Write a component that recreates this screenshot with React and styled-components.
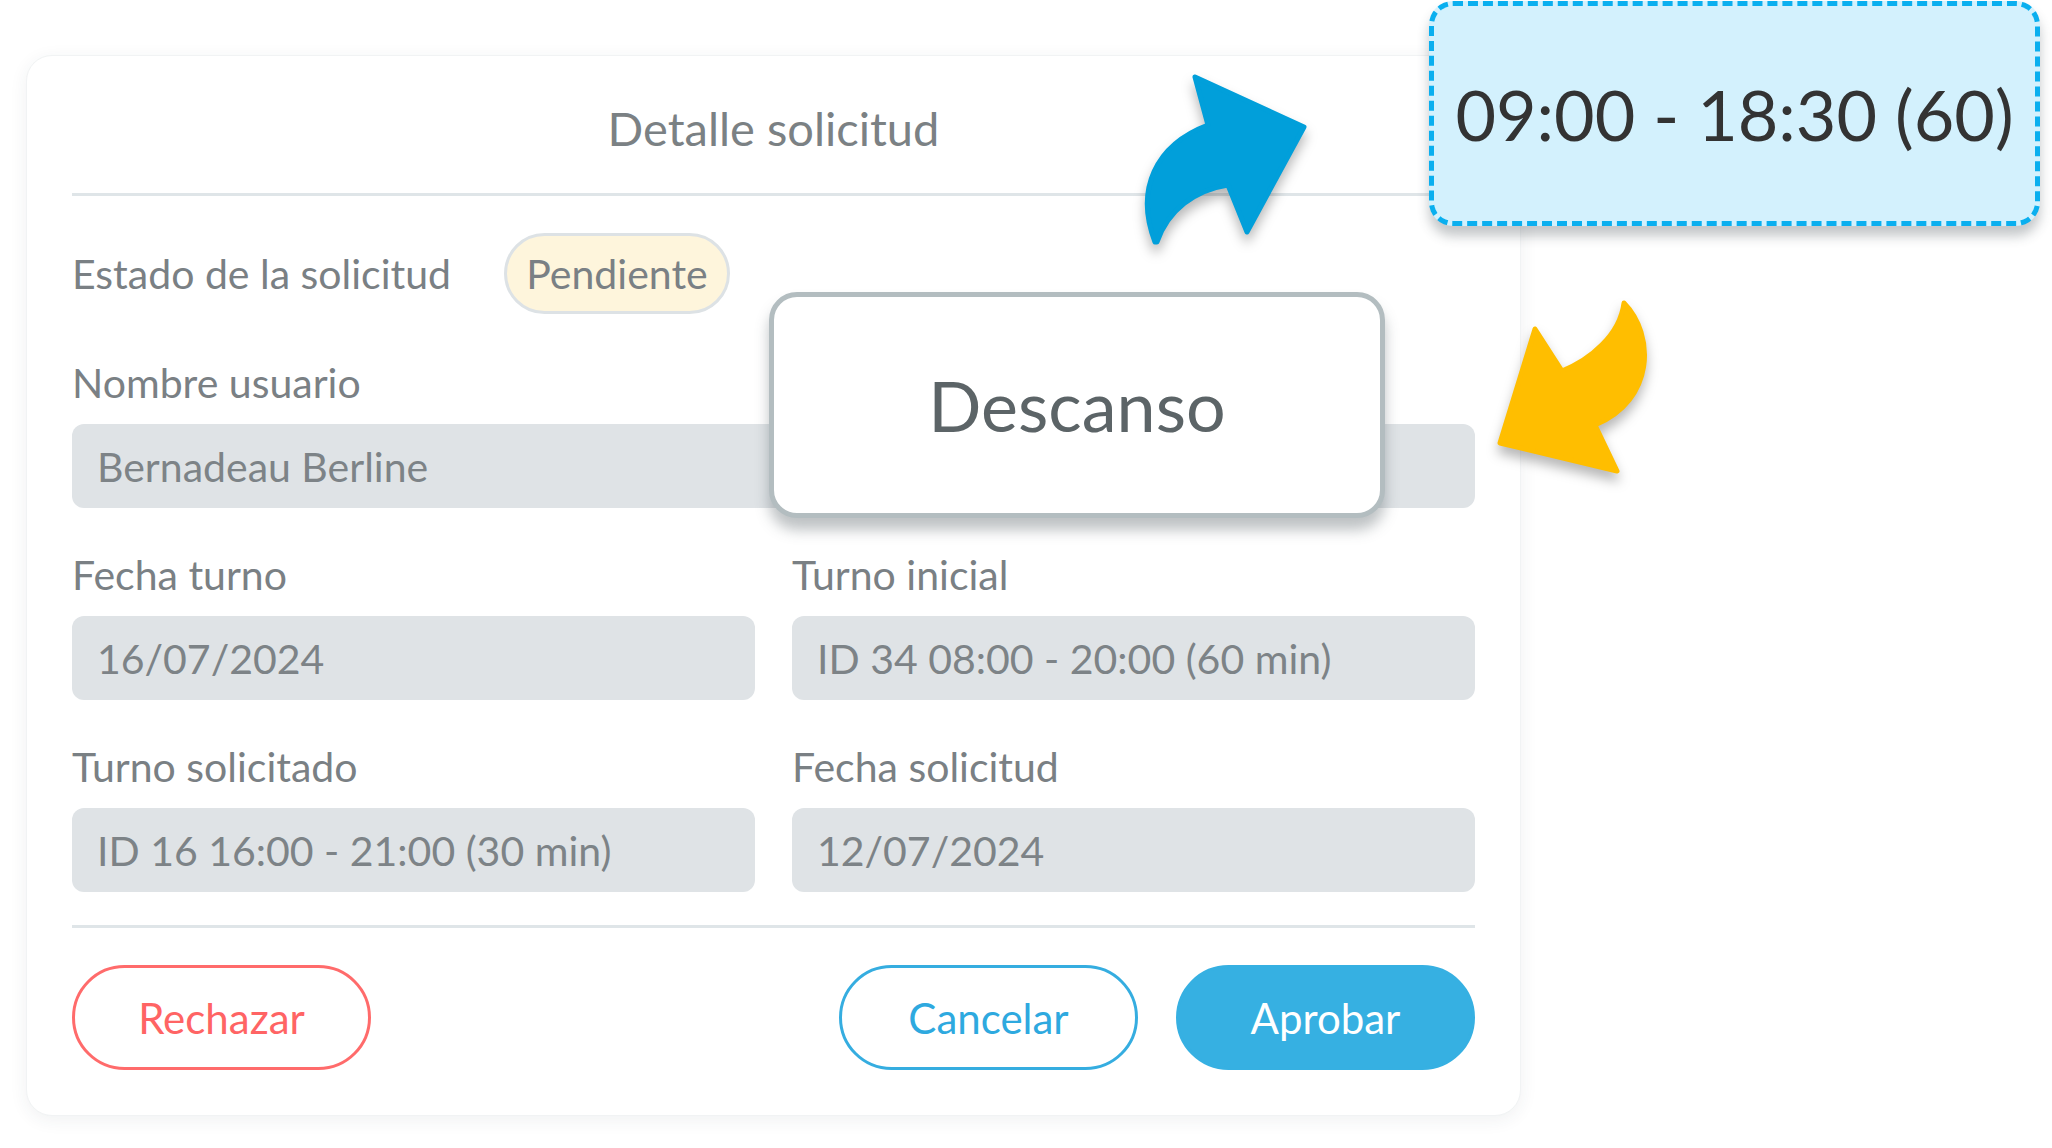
import React from "react";
import styled, { createGlobalStyle } from "styled-components";

const Global = createGlobalStyle`
  html, body { margin: 0; padding: 0; background: #ffffff; }
  body { font-family: "Lato", "Noto Sans", sans-serif; }
  * { box-sizing: border-box; }
`;

const Page = styled.div`
  position: relative;
  width: 2052px;
  height: 1148px;
  padding: 55px 0 0 26px;
  overflow: hidden;
  background: #ffffff;
`;

const Card = styled.section`
  width: 1495px;
  height: 1061px;
  background: #ffffff;
  border-radius: 26px;
  border: 1px solid #f1f3f4;
  box-shadow: 0 4px 18px rgba(40, 60, 70, 0.07);
  padding: 0 45px 0 45px;
  display: flex;
  flex-direction: column;
  color: #7a8085;
  font-family: "Lato", "Noto Sans", sans-serif;
`;

const Header = styled.header`
  height: 140px;
  padding-top: 6px;
  display: flex;
  align-items: center;
  justify-content: center;
  border-bottom: 3px solid #dfe5e8;
`;

const Title = styled.h1`
  margin: 0;
  font-weight: 400;
  font-size: 47px;
  color: #7b8184;
`;

const StatusRow = styled.div`
  margin-top: 37px;
  height: 81px;
  display: flex;
  align-items: center;
  gap: 53px;
`;

const Label = styled.div`
  font-size: 41px;
  line-height: 48px;
  color: #7a8084;
`;

const Pill = styled.span`
  height: 81px;
  width: 226px;
  border-radius: 41px;
  border: 3px solid #dde2e5;
  background: #fef5dc;
  display: flex;
  align-items: center;
  justify-content: center;
  font-size: 41px;
  color: #7a8084;
`;

const Fields = styled.div`
  margin-top: 45px;
  display: grid;
  grid-template-columns: 1fr 1fr;
  column-gap: 37px;
  row-gap: 43px;
`;

const Field = styled.div`
  display: flex;
  flex-direction: column;
  gap: 17px;
  grid-column: ${(p) => (p.$wide ? "1 / span 2" : "auto")};
`;

const Input = styled.div`
  height: 84px;
  border-radius: 12px;
  background: #dfe3e6;
  padding: 0 25px;
  display: flex;
  align-items: center;
  font-size: 41px;
  color: #7d8387;
`;

const Divider = styled.hr`
  margin: 33px 0 0;
  border: none;
  height: 3px;
  background: #dfe5e8;
`;

const Actions = styled.div`
  margin-top: 37px;
  display: flex;
  align-items: center;
  gap: 38px;
`;

const Button = styled.button`
  width: 299px;
  height: 105px;
  border-radius: 53px;
  font-family: "Lato", "Noto Sans", sans-serif;
  font-size: 42px;
  cursor: pointer;
  display: flex;
  align-items: center;
  justify-content: center;
  border: 3px solid ${(p) => p.$color};
  background: ${(p) => (p.$filled ? p.$color : "#ffffff")};
  color: ${(p) => (p.$filled ? "#ffffff" : p.$text || p.$color)};
  margin-right: ${(p) => (p.$pushLeft ? "auto" : "0")};
`;

const Callout = styled.div`
  position: absolute;
  display: flex;
  align-items: center;
  justify-content: center;
  font-family: "Lato", "Noto Sans", sans-serif;
  font-size: 70px;
`;

const BreakBox = styled(Callout)`
  left: 769px;
  top: 292px;
  width: 616px;
  height: 226px;
  background: #ffffff;
  border: 5px solid #b3bdc0;
  border-radius: 28px;
  box-shadow: 0 12px 14px rgba(70, 80, 85, 0.35);
  color: #5c6467;
`;

const TimeBox = styled(Callout)`
  left: 1429px;
  top: 1px;
  width: 611px;
  height: 225px;
  background: #d3f1fd;
  border: 5px dashed #0aafef;
  border-radius: 24px;
  box-shadow: 0 10px 12px rgba(60, 70, 75, 0.3);
  color: #333333;
`;

const Arrow = styled.svg`
  position: absolute;
  left: ${(p) => p.$x}px;
  top: ${(p) => p.$y}px;
  overflow: visible;
  filter: drop-shadow(0 8px 6px rgba(0, 0, 0, 0.28));
`;

export default function App() {
  return (
    <>
      <Global />
      <Page>
        <Card>
          <Header>
            <Title>Detalle solicitud</Title>
          </Header>
          <StatusRow>
            <Label>Estado de la solicitud</Label>
            <Pill>Pendiente</Pill>
          </StatusRow>
          <Fields>
            <Field $wide>
              <Label>Nombre usuario</Label>
              <Input>Bernadeau Berline</Input>
            </Field>
            <Field>
              <Label>Fecha turno</Label>
              <Input>16/07/2024</Input>
            </Field>
            <Field>
              <Label>Turno inicial</Label>
              <Input>ID 34 08:00 - 20:00 (60 min)</Input>
            </Field>
            <Field>
              <Label>Turno solicitado</Label>
              <Input>ID 16 16:00 - 21:00 (30 min)</Input>
            </Field>
            <Field>
              <Label>Fecha solicitud</Label>
              <Input>12/07/2024</Input>
            </Field>
          </Fields>
          <Divider />
          <Actions>
            <Button $color="#ff6b6b" $text="#ff6464" $pushLeft>
              Rechazar
            </Button>
            <Button $color="#35ade0" $text="#2ea9df">
              Cancelar
            </Button>
            <Button $color="#36b0e2" $filled>
              Aprobar
            </Button>
          </Actions>
        </Card>

        <Arrow $x={1130} $y={65} width="190" height="190" viewBox="0 0 190 190">
          <path
            d="M25 177 C5 125 25 80 78 60 L65 12 L174 62 L117 167 L98 120 C65 125 38 145 27 177 Z"
            fill="#019fda"
            stroke="#019fda"
            strokeWidth="5"
            strokeLinejoin="round"
          />
        </Arrow>

        <BreakBox>Descanso</BreakBox>

        <Arrow $x={1490} $y={290} width="180" height="190" viewBox="0 0 180 190">
          <path
            d="M134 13 C165 45 165 110 105 135 L127 181 L10 153 L45 39 L72 81 C100 70 130 45 134 13 Z"
            fill="#ffbe00"
            stroke="#ffbe00"
            strokeWidth="5"
            strokeLinejoin="round"
          />
        </Arrow>

        <TimeBox>09:00 - 18:30 (60)</TimeBox>
      </Page>
    </>
  );
}
